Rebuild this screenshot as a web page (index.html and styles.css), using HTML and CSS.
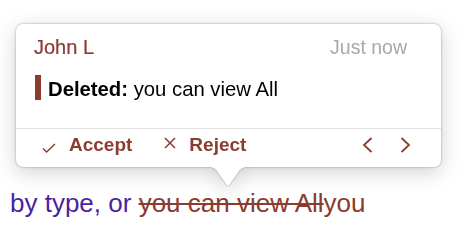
FILE: index.html
```html
<!DOCTYPE html>
<html lang="en">
<head>
    <meta charset="UTF-8">
    <title>Change balloon</title>
    <link rel="stylesheet" href="styles.css">
</head>
<body>

    <div class="balloon">
        <div class="balloon_card">
            <div class="balloon_head">
                <span class="author">John L</span>
                <span class="stamp">Just now</span>
            </div>
            <div class="change">
                <span class="change_bar"></span>
                <span class="change_text"><b>Deleted:</b> you can view All</span>
            </div>
            <div class="balloon_foot">
                <button class="action">
                    <svg class="icon_check" width="14" height="10" viewBox="0 0 14 10"><path d="M1 5.5 L4.6 9 L13 1" fill="none" stroke="currentColor" stroke-width="1.4"/></svg>
                    Accept
                </button>
                <button class="action">
                    <svg class="icon_x" width="12" height="12" viewBox="0 0 12 12"><path d="M1 1 L11 11 M11 1 L1 11" fill="none" stroke="currentColor" stroke-width="1.5"/></svg>
                    Reject
                </button>
                <div class="nav">
                    <button class="nav_btn">
                        <svg width="11" height="16" viewBox="0 0 11 16"><path d="M9.5 1 L2 8 L9.5 15" fill="none" stroke="currentColor" stroke-width="1.8"/></svg>
                    </button>
                    <button class="nav_btn">
                        <svg width="11" height="16" viewBox="0 0 11 16"><path d="M1.5 1 L9 8 L1.5 15" fill="none" stroke="currentColor" stroke-width="1.8"/></svg>
                    </button>
                </div>
            </div>
        </div>
        <svg class="balloon_tip" width="48" height="21" viewBox="0 0 48 21"><path d="M0 0 Q9 0 13 5 L22.5 18.5 Q24 20.5 25.5 18.5 L35 5 Q39 0 48 0 Z" fill="#fff"/></svg>
    </div>

    <p class="doc_line">by type, or <del>you can view All</del><ins>you</ins></p>

</body>
</html>
```

FILE: styles.css
```css
:root {
    --track-brown: #8b3b2f;
    --ink-purple: #4b1fa2;
    --muted-gray: #a8a8a8;
}

body {
    margin: 0;
    background: #fff;
    font-family: "Liberation Sans", Arial, sans-serif;
}

.balloon {
    position: relative;
    width: 425px;
    margin: 24px 0 0 16px;
    filter: drop-shadow(0 0 1px rgba(0, 0, 0, 0.35)) drop-shadow(0 5px 10px rgba(0, 0, 0, 0.18));
}

.balloon_card {
    background: #fff;
    border-radius: 7px;
    height: 143px;
    box-sizing: border-box;
    display: flex;
    flex-direction: column;
}

.balloon_head {
    display: flex;
    justify-content: space-between;
    padding: 12px 34px 0 18px;
    font-size: 19.5px;
    line-height: 22px;
}

.author {
    color: var(--track-brown);
    font-size: 20px;
    -webkit-text-stroke: 0.2px var(--track-brown);
}

.stamp {
    color: var(--muted-gray);
}

.change {
    display: flex;
    align-items: stretch;
    margin: 17px 0 0 19px;
    height: 25px;
}

.change_bar {
    width: 6px;
    background: var(--track-brown);
    margin-right: 7px;
}

.change_text {
    font-size: 20.3px;
    line-height: 29px;
    color: #000;
}

.balloon_foot {
    margin-top: auto;
    border-top: 1px solid #e2e2e2;
    display: flex;
    align-items: center;
    padding: 5px 30px 11px 26px;
    height: 22px;
}

.action {
    display: flex;
    align-items: center;
    background: none;
    border: none;
    padding: 0;
    margin-right: 32px;
    font-family: inherit;
    font-size: 19px;
    font-weight: bold;
    line-height: 22px;
    color: var(--track-brown);
    cursor: pointer;
}

.icon_check {
    margin: 5px 13px 0 0;
}

.icon_x {
    margin: -4px 13px 0 0;
}

.nav {
    margin-left: auto;
    display: flex;
    gap: 27px;
}

.nav_btn {
    background: none;
    border: none;
    padding: 0;
    color: var(--track-brown);
    display: flex;
    cursor: pointer;
}

.balloon_tip {
    position: absolute;
    left: 188px;
    top: 142px;
}

.doc_line {
    margin: 21px 0 0 10px;
    font-size: 26px;
    line-height: 30px;
    color: var(--ink-purple);
}

.doc_line del {
    color: var(--track-brown);
    text-decoration-thickness: 2px;
}

.doc_line ins {
    color: var(--track-brown);
    text-decoration: none;
}
```
